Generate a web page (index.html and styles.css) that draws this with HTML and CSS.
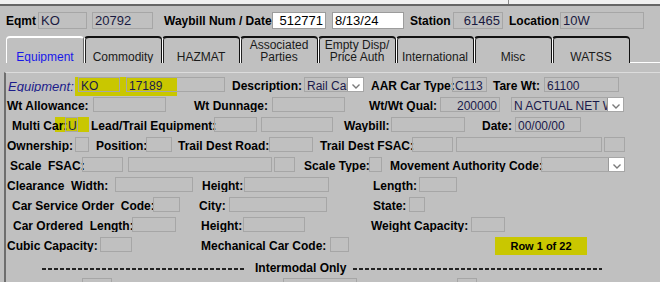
FILE: index.html
```html
<!DOCTYPE html>
<html lang="en">
<head>
    <meta charset="UTF-8">
    <title>Waybill Equipment</title>
    <link rel="stylesheet" href="styles.css">
</head>
<body>
<div class="titlebar"><span class="titlebar-split"></span></div>

<div class="header">
    <span class="hlbl w28">Eqmt</span>
    <span class="hfld ml4 w49">KO</span>
    <span class="hfld ml5 w61">20792</span>
    <span class="hlbl ml11 w104">Waybill Num / Date</span>
    <span class="hfld white right ml4 w54">512771</span>
    <span class="hfld white ml6 w72">8/13/24</span>
    <span class="hlbl ml6 w38">Station</span>
    <span class="hfld right ml5 w50">61465</span>
    <span class="hlbl ml6 w48">Location</span>
    <span class="hfld ml3 w84">10W</span>
</div>

<div class="tabs">
    <div class="tab active">Equipment</div>
    <div class="tab">Commodity</div>
    <div class="tab">HAZMAT</div>
    <div class="tab">Associated<br>Parties</div>
    <div class="tab">Empty Disp/<br>Price Auth</div>
    <div class="tab">International</div>
    <div class="tab">Misc</div>
    <div class="tab">WATSS</div>
    <div class="tab-rest"></div>
</div>

<div class="panel">
    <div class="row">
        <span class="lbl key ml2 w66">Equipment:</span>
        <span class="mark mark-equip ml1">
            <span class="fld w42">KO</span>
            <span class="fld ml6 w99">17189</span>
        </span>
        <span class="lbl ml7 w69">Description:</span>
        <span class="fld combo ml3 w60"><span class="txt">Rail Car</span><span class="dd"><svg width="8" height="5" viewBox="0 0 8 5"><polyline points="0.5,0.5 4,4 7.5,0.5" fill="none" stroke="#7a7a7a" stroke-width="1.4"/></svg></span></span>
        <span class="lbl ml7 w80">AAR Car Type:</span>
        <span class="fld ml1 w35">C113</span>
        <span class="lbl ml6 w48">Tare Wt:</span>
        <span class="fld ml3 w75">61100</span>
    </div>

    <div class="row">
        <span class="lbl ml1 w82">Wt Allowance:</span>
        <span class="fld ml4 w73"></span>
        <span class="lbl ml28 w72">Wt Dunnage:</span>
        <span class="fld ml6 w73"></span>
        <span class="lbl ml24 w67">Wt/Wt Qual:</span>
        <span class="fld right ml4 w60">200000</span>
        <span class="fld combo ml11 w113"><span class="txt">N ACTUAL NET WEIGHT</span><span class="dd"><svg width="8" height="5" viewBox="0 0 8 5"><polyline points="0.5,0.5 4,4 7.5,0.5" fill="none" stroke="#7a7a7a" stroke-width="1.4"/></svg></span></span>
    </div>

    <div class="row">
        <span class="mark mark-multi ml6">
            <span class="lbl w52">Multi Car:</span>
            <span class="fld ml1 w13">U</span>
        </span>
        <span class="lbl ml2 w121">Lead/Trail Equipment:</span>
        <span class="fld ml2 w43"></span>
        <span class="fld ml4 w72"></span>
        <span class="lbl ml11 w45">Waybill:</span>
        <span class="fld ml2 w74"></span>
        <span class="lbl ml17 w29">Date:</span>
        <span class="fld ml4 w66">00/00/00</span>
    </div>

    <div class="row">
        <span class="lbl ml1 w67">Ownership:</span>
        <span class="fld ml1 w14"></span>
        <span class="lbl ml7 w49">Position:</span>
        <span class="fld ml1 w26"></span>
        <span class="lbl ml6 w89">Trail Dest Road:</span>
        <span class="fld ml2 w44"></span>
        <span class="lbl ml7 w90">Trail Dest FSAC:</span>
        <span class="fld ml2 w41"></span>
        <span class="fld ml3 w146"></span>
        <span class="fld ml2 w21"></span>
    </div>

    <div class="row">
        <span class="lbl ml4 w71">Scale  FSAC:</span>
        <span class="fld ml1 w41"></span>
        <span class="fld ml5 w144"></span>
        <span class="fld ml2 w21"></span>
        <span class="lbl ml9 w64">Scale Type:</span>
        <span class="fld ml1 w13"></span>
        <span class="lbl ml8 w150">Movement Authority Code:</span>
        <span class="fld combo ml1 w84"><span class="txt"></span><span class="dd"><svg width="8" height="5" viewBox="0 0 8 5"><polyline points="0.5,0.5 4,4 7.5,0.5" fill="none" stroke="#7a7a7a" stroke-width="1.4"/></svg></span></span>
    </div>

    <div class="row">
        <span class="lbl ml1 w103">Clearance  Width:</span>
        <span class="fld ml5 w78"></span>
        <span class="lbl ml9 w40">Height:</span>
        <span class="fld ml2 w85"></span>
        <span class="lbl ml44 w43">Length:</span>
        <span class="fld ml3 w38"></span>
    </div>

    <div class="row">
        <span class="lbl ml6 w140">Car Service Order  Code:</span>
        <span class="fld ml1 w27"></span>
        <span class="lbl ml19 w25">City:</span>
        <span class="fld ml5 w98"></span>
        <span class="lbl ml46 w33">State:</span>
        <span class="fld ml3 w16"></span>
    </div>

    <div class="row">
        <span class="lbl ml7 w118">Car Ordered  Length:</span>
        <span class="fld ml1 w44"></span>
        <span class="lbl ml25 w40">Height:</span>
        <span class="fld ml2 w62"></span>
        <span class="lbl ml66 w97">Weight Capacity:</span>
        <span class="fld ml3 w34"></span>
    </div>

    <div class="row">
        <span class="lbl ml1 w88">Cubic Capacity:</span>
        <span class="fld ml5 w32"></span>
        <span class="lbl ml69 w125">Mechanical Car Code:</span>
        <span class="fld ml4 w19"></span>
        <span class="rowcount ml146 w92">Row 1 of 22</span>
    </div>

    <div class="section">
        <span class="dashes ml36 w204"></span>
        <span class="section-title ml9">Intermodal Only</span>
        <span class="dashes ml7 w249"></span>
    </div>

    <div class="row">
        <span class="fld ml76 w30"></span>
        <span class="fld ml171 w74"></span>
        <span class="fld ml100 w20"></span>
    </div>
</div>
</body>
</html>
```

FILE: styles.css
```css
body {
    margin: 0;
    background: #c0c0c0;
    font-family: "Liberation Sans", Arial, sans-serif;
    font-size: 12px;
    color: #000;
    overflow: hidden;
}

/* strip of the window above the form */
.titlebar {
    position: relative;
    height: 4px;
    background: #f0f0f0;
    border-bottom: 2px solid #666;
}

.titlebar-split {
    position: absolute;
    left: 508px;
    top: 0;
    width: 1px;
    height: 4px;
    background: #8a8a8a;
}

/* header line: Eqmt / Waybill / Station / Location */
.header {
    display: flex;
    align-items: center;
    height: 17px;
    padding: 6px 0 0 6px;
}

.hlbl {
    font-weight: bold;
    font-size: 12px;
    white-space: nowrap;
}

.hfld {
    height: 17px;
    box-sizing: border-box;
    border: 1px solid #a6a6a6;
    padding: 0 2px;
    line-height: 15px;
    font-size: 13px;
    color: #1a1a40;
    white-space: nowrap;
    overflow: hidden;
}

.hfld.white {
    background: #fff;
    border-color: #9c9c9c;
    color: #000;
}

.right {
    text-align: right;
}

/* tabs */
.tabs {
    display: flex;
    height: 27px;
    margin-top: 7px;
    padding-left: 6px;
}

.tab {
    width: 78px;
    height: 27px;
    box-sizing: border-box;
    border-top: 2px solid #111;
    border-left: 1px solid #fff;
    border-right: 1px solid #111;
    border-radius: 4px 4px 0 0;
    box-shadow: inset 1px 0 #222;
    display: flex;
    align-items: flex-end;
    justify-content: center;
    text-align: center;
    line-height: 12px;
    color: #1a1a1a;
    overflow: hidden;
}

.tab.active {
    border-top-color: #fff;
    border-right-color: #6a6a6a;
    box-shadow: none;
    color: #1818e8;
}

.tab-rest {
    flex: 1;
    border-bottom: 1px solid #fff;
}

/* form panel */
.panel {
    margin: 9px 0 0 4px;
    padding-top: 4px;
    border-top: 1px solid #dcdcdc;
    border-left: 2px solid #6e6e6e;
}

.row {
    display: flex;
    align-items: flex-start;
    height: 20px;
}

.lbl {
    height: 15px;
    box-sizing: border-box;
    padding-top: 2px;
    line-height: 15px;
    font-weight: bold;
    white-space: pre;
    overflow-y: clip;
    flex-shrink: 0;
}

.lbl.key {
    font-weight: normal;
    font-style: italic;
    color: #1c1c8a;
    font-size: 13px;
}

.fld {
    height: 15px;
    box-sizing: border-box;
    border: 1px solid #a6a6a6;
    padding: 1px 2px 0;
    line-height: 14px;
    color: #1a1a4a;
    white-space: nowrap;
    overflow: hidden;
    flex-shrink: 0;
}

.combo {
    display: flex;
    padding-right: 0;
}

.combo .txt {
    flex: 1;
    overflow: hidden;
}

.dd {
    width: 16px;
    height: 13px;
    margin-top: -1px;
    background: #fff;
    border-left: 1px solid #9a9a9a;
    display: flex;
    align-items: flex-end;
    justify-content: center;
    padding-bottom: 2px;
    box-sizing: border-box;
    flex-shrink: 0;
}

/* yellow marker strokes */
.mark {
    display: flex;
    align-items: flex-start;
    flex-shrink: 0;
}

.mark-equip {
    padding: 0 0 4px 3px;
    margin-bottom: -4px;
    background: linear-gradient(90deg, #c9c700 0 102px, transparent 102px);
}

.mark-multi {
    padding-right: 11px;
    background: linear-gradient(90deg, transparent 0 43px, #c9c700 43px);
}

.rowcount {
    height: 18px;
    line-height: 19px;
    background: #c9c700;
    font-weight: bold;
    font-size: 11px;
    text-align: center;
    flex-shrink: 0;
}

.section {
    display: flex;
    align-items: center;
    height: 21px;
}

.dashes {
    height: 2px;
    margin-top: 2px;
    background: repeating-linear-gradient(90deg, #222 0 4px, transparent 4px 6px);
    flex-shrink: 0;
}

.section-title {
    font-weight: bold;
    white-space: nowrap;
    padding-top: 1px;
}

/* sizes and gaps taken from the form */
.ml1 { margin-left: 1px; }
.ml2 { margin-left: 2px; }
.ml3 { margin-left: 3px; }
.ml4 { margin-left: 4px; }
.ml5 { margin-left: 5px; }
.ml6 { margin-left: 6px; }
.ml7 { margin-left: 7px; }
.ml8 { margin-left: 8px; }
.ml9 { margin-left: 9px; }
.ml11 { margin-left: 11px; }
.ml17 { margin-left: 17px; }
.ml19 { margin-left: 19px; }
.ml24 { margin-left: 24px; }
.ml25 { margin-left: 25px; }
.ml28 { margin-left: 28px; }
.ml36 { margin-left: 36px; }
.ml44 { margin-left: 44px; }
.ml46 { margin-left: 46px; }
.ml66 { margin-left: 66px; }
.ml69 { margin-left: 69px; }
.ml76 { margin-left: 76px; }
.ml100 { margin-left: 100px; }
.ml146 { margin-left: 146px; }
.ml171 { margin-left: 171px; }

.w13 { width: 13px; }
.w14 { width: 14px; }
.w16 { width: 16px; }
.w19 { width: 19px; }
.w20 { width: 20px; }
.w21 { width: 21px; }
.w25 { width: 25px; }
.w26 { width: 26px; }
.w27 { width: 27px; }
.w28 { width: 28px; }
.w29 { width: 29px; }
.w30 { width: 30px; }
.w32 { width: 32px; }
.w33 { width: 33px; }
.w34 { width: 34px; }
.w35 { width: 35px; }
.w38 { width: 38px; }
.w40 { width: 40px; }
.w41 { width: 41px; }
.w42 { width: 42px; }
.w43 { width: 43px; }
.w44 { width: 44px; }
.w45 { width: 45px; }
.w48 { width: 48px; }
.w49 { width: 49px; }
.w50 { width: 50px; }
.w52 { width: 52px; }
.w54 { width: 54px; }
.w60 { width: 60px; }
.w61 { width: 61px; }
.w62 { width: 62px; }
.w64 { width: 64px; }
.w66 { width: 66px; }
.w67 { width: 67px; }
.w69 { width: 69px; }
.w71 { width: 71px; }
.w72 { width: 72px; }
.w73 { width: 73px; }
.w74 { width: 74px; }
.w75 { width: 75px; }
.w78 { width: 78px; }
.w80 { width: 80px; }
.w82 { width: 82px; }
.w84 { width: 84px; }
.w85 { width: 85px; }
.w88 { width: 88px; }
.w89 { width: 89px; }
.w90 { width: 90px; }
.w92 { width: 92px; }
.w97 { width: 97px; }
.w98 { width: 98px; }
.w99 { width: 99px; }
.w103 { width: 103px; }
.w104 { width: 104px; }
.w113 { width: 113px; }
.w118 { width: 118px; }
.w121 { width: 121px; }
.w125 { width: 125px; }
.w140 { width: 140px; }
.w144 { width: 144px; }
.w146 { width: 146px; }
.w150 { width: 150px; }
.w204 { width: 204px; }
.w249 { width: 249px; }
```
